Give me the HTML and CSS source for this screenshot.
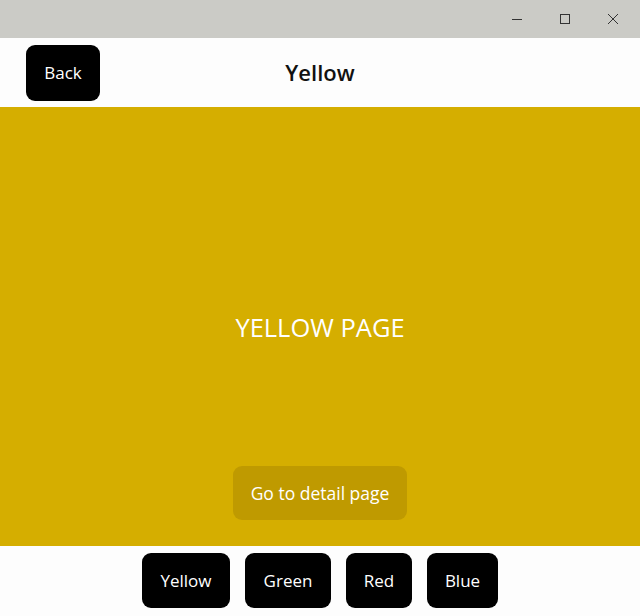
FILE: index.html
```
<!DOCTYPE html>
<html>
<head>
<meta charset="utf-8">
<link rel="stylesheet" href="styles.css">
</head>
<body>
<div class="window">
  <div class="titlebar">
    <span class="ctl">
      <svg width="12" height="12" viewBox="0 0 12 12"><path d="M1 6.5h10" stroke="#333" stroke-width="1"/></svg>
    </span>
    <span class="ctl">
      <svg width="12" height="12" viewBox="0 0 12 12"><rect x="1.5" y="1.5" width="9" height="9" fill="none" stroke="#333" stroke-width="1"/></svg>
    </span>
    <span class="ctl">
      <svg width="12" height="12" viewBox="0 0 12 12"><path d="M1 1l10 10M11 1L1 11" stroke="#333" stroke-width="1"/></svg>
    </span>
  </div>
  <div class="header">
    <button class="btn back">Back</button>
    <div class="title">Yellow</div>
  </div>
  <div class="content">
    <div class="page-label">YELLOW PAGE</div>
    <button class="detail">Go to detail page</button>
  </div>
  <div class="tabs">
    <button class="btn tab t-yellow">Yellow</button>
    <button class="btn tab t-green">Green</button>
    <button class="btn tab t-red">Red</button>
    <button class="btn tab t-blue">Blue</button>
  </div>
</div>
</body>
</html>
```
FILE: styles.css
```
* { box-sizing: border-box; }
html, body { margin: 0; padding: 0; }
body {
  width: 640px;
  height: 616px;
  overflow: hidden;
  font-family: "Open Sans", "Noto Sans", sans-serif;
  background: #fdfdfd;
}
.window {
  display: flex;
  flex-direction: column;
  height: 616px;
}
.titlebar {
  height: 38px;
  background: #cbcbc6;
  display: flex;
  justify-content: flex-end;
  align-items: center;
  padding-right: 3px;
}
.ctl {
  width: 48px;
  height: 38px;
  display: flex;
  align-items: center;
  justify-content: center;
}
.ctl svg { display: block; }
.header {
  height: 69px;
  background: #fdfdfd;
  position: relative;
  display: flex;
  align-items: center;
  padding-left: 26px;
}
.btn {
  background: #000;
  color: #fff;
  border: none;
  border-radius: 9px;
  font-family: "Open Sans", "Noto Sans", sans-serif;
  font-size: 17px;
  padding: 0;
  display: flex;
  align-items: center;
  justify-content: center;
}
.back {
  width: 74px;
  height: 56px;
}
.title {
  position: absolute;
  left: 0;
  right: 0;
  top: 0;
  bottom: 0;
  display: flex;
  align-items: center;
  justify-content: center;
  font-size: 22px;
  font-weight: 600;
  color: #111;
  pointer-events: none;
  padding-bottom: 2px;
}
.content {
  height: 439px;
  background: #d5ae00;
  display: flex;
  flex-direction: column;
  align-items: center;
}
.page-label {
  margin-top: 203px;
  color: #fff;
  font-size: 25.5px;
  font-weight: 500;
  line-height: 34px;
}
.detail {
  margin-top: 122px;
  width: 174px;
  height: 54px;
  border: none;
  border-radius: 9px;
  background: #bf9a00;
  color: #fff;
  font-family: "Open Sans", "Noto Sans", sans-serif;
  font-size: 17.5px;
  padding: 0;
}
.tabs {
  flex: 1;
  background: #fdfdfd;
  display: flex;
  justify-content: center;
  align-items: flex-start;
  gap: 15px;
  padding-top: 7px;
}
.tab { height: 55px; }
.t-yellow { width: 88px; }
.t-green { width: 86px; }
.t-red { width: 66px; }
.t-blue { width: 71px; }
```
